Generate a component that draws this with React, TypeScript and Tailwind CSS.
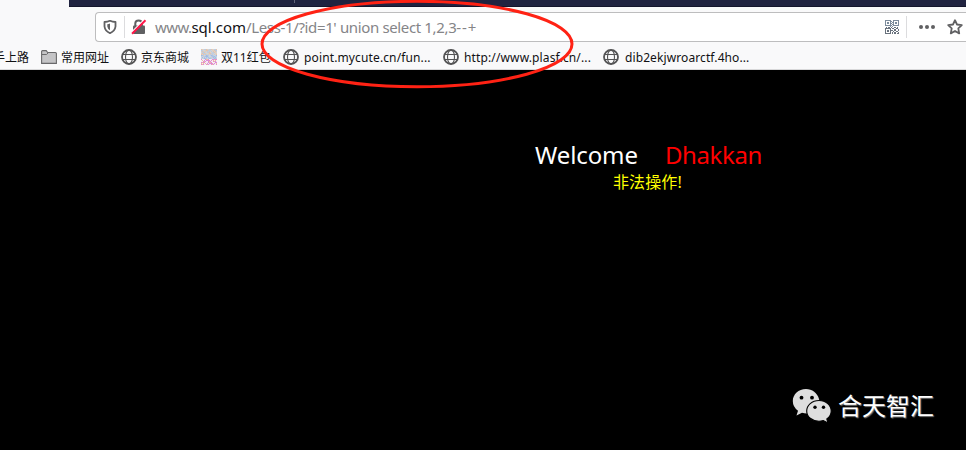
import type { ReactNode } from "react";

function Globe() {
  return (
    <svg width="16" height="16" viewBox="0 0 16 16" fill="none" stroke="#545455" className="shrink-0">
      <circle cx="8" cy="8" r="7" strokeWidth="1.8" />
      <ellipse cx="8" cy="8" rx="3.5" ry="7" strokeWidth="1.1" />
      <path d="M2 5.5H14M2 10.5H14" strokeWidth="1" />
    </svg>
  );
}

function Folder() {
  return (
    <svg width="16" height="14" viewBox="0 0 16 14" className="shrink-0">
      <path d="M.6 13.4V1.6Q.6.6 1.6.6H5.2L6.7 2.5H14.4Q15.4 2.5 15.4 3.5V13.4Z" fill="#c4c4c6" stroke="#69696b" strokeWidth="1.1" />
      <path d="M1 4.5H5.6L7 3" fill="none" stroke="#69696b" />
    </svg>
  );
}

const noiseTop = ["#e9c3a8", "#c3cfdc", "#ddd0c4", "#b9cbe4", "#d8d4d0"];
const noiseMiddle = ["#a9c3e8", "#bcd0e6", "#c5c9da", "#9fbbe4", "#d1d6dd"];
const noiseBottom = ["#e58acb", "#f5e6f0", "#efc0a0", "#f4f0f5", "#d98adf"];

function NoiseIcon() {
  return (
    <svg width="16" height="16" viewBox="0 0 16 16" shapeRendering="crispEdges" className="shrink-0">
      {Array.from({ length: 256 }, (_, i) => {
        const x = i % 16;
        const y = Math.floor(i / 16);
        const colors = y < 6 ? noiseTop : y < 10 ? noiseMiddle : noiseBottom;
        return <rect key={i} x={x} y={y} width="1" height="1" fill={colors[(x * 2 + y * 3 + ((x * y) % 3)) % 5]} />;
      })}
    </svg>
  );
}

const qr = [
  "11111100111111",
  "10000110100001",
  "10110101101101",
  "10110110101101",
  "10000101100001",
  "11111110111111",
  "00000101000000",
  "01011010011010",
  "11111101100110",
  "10000100011001",
  "10110111011001",
  "10110100100110",
  "10000101011001",
  "11111101011011",
];

function QrIcon() {
  return (
    <svg width="14" height="14" viewBox="0 0 14 14" shapeRendering="crispEdges">
      {qr.flatMap((row, y) =>
        row.split("").map((v, x) => (v === "1" ? <rect key={`${x}-${y}`} x={x} y={y} width="1" height="1" fill={y < 7 ? "#7c8b9b" : "#69727d"} /> : null)),
      )}
    </svg>
  );
}

function Bookmark({ icon, gap, width, children }: { icon: ReactNode; gap: string; width: string; children: ReactNode }) {
  return (
    <div className={`flex shrink-0 items-center ${gap} ${width}`}>
      {icon}
      <span className="pt-[2px]">{children}</span>
    </div>
  );
}

export default function App() {
  return (
    <div className="relative flex h-[450px] w-[966px] flex-col overflow-hidden bg-black font-['Noto_Sans','Noto_Sans_CJK_SC',sans-serif]">
      <header className="h-[70px] shrink-0 bg-[#f9f9fa]">
        <div className="ml-[69px] h-[7px] border-b border-[#14152c] bg-[#202340]">
          <div className="ml-[225px] h-[3px] w-px bg-[#62647a]" />
        </div>
        <div className="flex h-[38px] pt-[5px] pl-[95px]">
          <div className="flex h-[30px] flex-1 items-center rounded-l-sm border border-r-0 border-[#bdbdbe] bg-white">
            <svg width="14" height="16" viewBox="0 0 14 16" className="ml-[7px] shrink-0">
              <path d="M7 1.8Q9.5 3 12.5 3V7.5Q12 12 7 14.2Q2 12 1.5 7.5V3Q4.5 3 7 1.8Z" fill="none" stroke="#606062" strokeWidth="1.8" strokeLinejoin="round" />
              <path d="M7 4.6Q5.8 5.1 4.3 5.2V7.6Q4.6 10 7 11.3Z" fill="#606062" />
            </svg>
            <div className="ml-[7px] h-[22px] w-px bg-[#dcdcde]" />
            <svg width="16" height="16" viewBox="0 0 16 16" className="ml-[6px] shrink-0">
              <path d="M4.3 7V4.5Q4.3 1.5 7.6 1.5T10.9 4.5V7" fill="none" stroke="#606062" strokeWidth="2" />
              <rect x="2" y="6.5" width="12" height="8.5" rx="1" fill="#606062" />
              <path d="M1 13L13 1" stroke="white" strokeWidth="1.6" />
              <path d="M1 14.7L14.5 1.2" stroke="#ff1648" strokeWidth="2" />
            </svg>
            <span className="ml-[8px] text-[15px] leading-5 tracking-[-0.36px] whitespace-pre text-[#858588]">
              <span className="tracking-[-0.6px]">www.</span>
              <span className="tracking-[0px] text-[#111113]">sql.com</span>/Less-1/?id=1' union select 1,2,3<span className="tracking-[0.8px]">--</span>+
            </span>
            <div className="ml-auto flex shrink-0 items-center">
              <QrIcon />
              <div className="ml-[7px] h-[22px] w-px bg-[#dcdcde]" />
              <svg width="16" height="4" viewBox="0 0 16 4" fill="#606062" className="ml-[12px]">
                <circle cx="2" cy="2" r="2" />
                <circle cx="8" cy="2" r="2" />
                <circle cx="14" cy="2" r="2" />
              </svg>
              <svg width="16" height="16" viewBox="0 0 16 16" fill="none" stroke="#606062" strokeWidth="1.8" strokeLinejoin="round" className="mr-[3px] ml-[12px]">
                <path d="M8 1.2L10 5.5L14.8 6.1L11.3 9.3L12.2 14.4L8 12L3.8 14.4L4.7 9.3L1.2 6.1L6 5.5Z" />
              </svg>
            </div>
          </div>
        </div>
        <nav className="flex h-[25px] items-center border-b border-[#d8d8d9] text-[12px] leading-4 whitespace-nowrap text-[#111113]">
          <span className="-ml-[7px] w-[48px] shrink-0 pt-[2px]">手上路</span>
          <Bookmark icon={<Folder />} gap="gap-[4px]" width="w-[80px]">常用网址</Bookmark>
          <Bookmark icon={<Globe />} gap="gap-[4px]" width="w-[80px]">京东商城</Bookmark>
          <Bookmark icon={<NoiseIcon />} gap="gap-[4px]" width="w-[82px]">双11红包</Bookmark>
          <Bookmark icon={<Globe />} gap="gap-[5px]" width="w-[160px] tracking-[0.13px]">point.mycute.cn/fun...</Bookmark>
          <Bookmark icon={<Globe />} gap="gap-[5px]" width="w-[160px] tracking-[0.13px]">http://www.plasf.cn/...</Bookmark>
          <Bookmark icon={<Globe />} gap="gap-[6px]" width="w-[160px] tracking-[0.1px]">dib2ekjwroarctf.4ho...</Bookmark>
        </nav>
      </header>

      <main className="flex flex-1 flex-col">
        <div className="mt-[69px] ml-[535px] flex h-[32px] items-center text-[24px] leading-8 whitespace-nowrap">
          <span className="w-[130px] tracking-[-0.1px] text-white">Welcome</span>
          <span className="tracking-[-0.4px] text-[#ff0000]">Dhakkan</span>
        </div>
        <div className="ml-[613px] h-[22px] text-[16px] leading-[22px] tracking-[0.1px] text-[#ffff00]">非法操作!</div>
        <div className="mt-auto mr-[32px] mb-[27px] flex items-center justify-end">
          <svg width="40" height="34" viewBox="0 0 40 34" className="mr-[6px]">
            <path d="M14 0C6.5 0 .8 5.5 .8 12Q.8 18 6 21.7L4.5 26.5L10 23.7Q14 25 17 24.2C28 23 28 14 27 10C25.5 4 20 0 14 0Z" fill="#dedede" />
            <path d="M27 11.5C20 11.5 14.7 16.2 14.7 22S20 32.2 27 32.2Q29 32.2 31.3 31.5L36 34L34.8 30Q39.2 26.8 39.2 22C39.2 16.2 34 11.5 27 11.5Z" fill="#dedede" stroke="black" strokeWidth="1.1" />
            <circle cx="9.5" cy="8.7" r="1.9" />
            <circle cx="20" cy="8.7" r="1.9" />
            <circle cx="23" cy="18.3" r="1.7" />
            <circle cx="31.5" cy="18.3" r="1.7" />
          </svg>
          <span className="text-[24px] leading-8 text-white [text-shadow:1px_1px_1px_#777]">合天智汇</span>
        </div>
      </main>

      <svg width="318" height="92" viewBox="0 0 318 92" fill="none" className="pointer-events-none absolute top-0 left-[258px]">
        <ellipse cx="159" cy="44" rx="155" ry="42.7" stroke="#ff2214" strokeWidth="3" />
      </svg>
    </div>
  );
}
